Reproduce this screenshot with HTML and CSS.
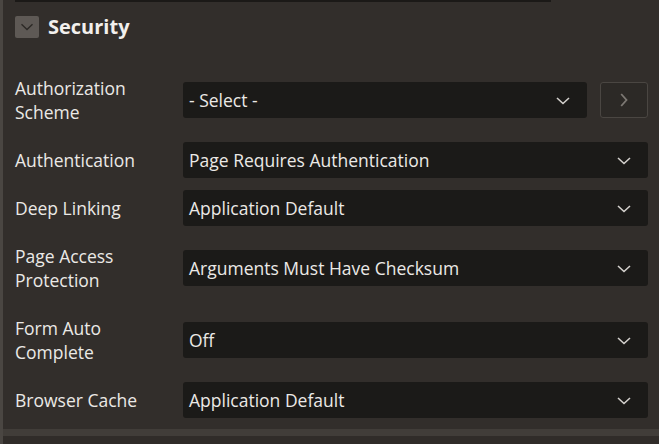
FILE: index.html
```html
<!DOCTYPE html>
<html>
<head>
<meta charset="utf-8">
<link rel="stylesheet" href="styles.css">
</head>
<body>
<div class="panel">
  <div class="prev-bar"></div>
  <div class="header">
    <button class="toggle" aria-label="Collapse">
      <svg width="14" height="8" viewBox="0 0 14 8"><path d="M1.5 1.2 L7 6.5 L12.5 1.2" fill="none" stroke="#2c2926" stroke-width="1.4"/></svg>
    </button>
    <h2 class="title">Security</h2>
  </div>
  <div class="form">
    <div class="row tall">
      <div class="label">Authorization<br>Scheme</div>
      <div class="field">
        <div class="select"><span>- Select -</span><svg class="chev" width="14" height="8" viewBox="0 0 14 8"><path d="M1 1 L7 6.5 L13 1" fill="none" stroke="#d4d1cd" stroke-width="1.6"/></svg></div>
        <button class="go" aria-label="Go"><svg width="8" height="14" viewBox="0 0 8 14"><path d="M1.2 1 L6.5 7 L1.2 13" fill="none" stroke="#7d7873" stroke-width="1.8"/></svg></button>
      </div>
    </div>
    <div class="row">
      <div class="label">Authentication</div>
      <div class="field">
        <div class="select"><span>Page Requires Authentication</span><svg class="chev" width="14" height="8" viewBox="0 0 14 8"><path d="M1 1 L7 6.5 L13 1" fill="none" stroke="#d4d1cd" stroke-width="1.6"/></svg></div>
      </div>
    </div>
    <div class="row">
      <div class="label">Deep Linking</div>
      <div class="field">
        <div class="select"><span>Application Default</span><svg class="chev" width="14" height="8" viewBox="0 0 14 8"><path d="M1 1 L7 6.5 L13 1" fill="none" stroke="#d4d1cd" stroke-width="1.6"/></svg></div>
      </div>
    </div>
    <div class="row tall">
      <div class="label">Page Access<br>Protection</div>
      <div class="field">
        <div class="select"><span>Arguments Must Have Checksum</span><svg class="chev" width="14" height="8" viewBox="0 0 14 8"><path d="M1 1 L7 6.5 L13 1" fill="none" stroke="#d4d1cd" stroke-width="1.6"/></svg></div>
      </div>
    </div>
    <div class="row tall">
      <div class="label">Form Auto<br>Complete</div>
      <div class="field">
        <div class="select"><span>Off</span><svg class="chev" width="14" height="8" viewBox="0 0 14 8"><path d="M1 1 L7 6.5 L13 1" fill="none" stroke="#d4d1cd" stroke-width="1.6"/></svg></div>
      </div>
    </div>
    <div class="row">
      <div class="label">Browser Cache</div>
      <div class="field">
        <div class="select"><span>Application Default</span><svg class="chev" width="14" height="8" viewBox="0 0 14 8"><path d="M1 1 L7 6.5 L13 1" fill="none" stroke="#d4d1cd" stroke-width="1.6"/></svg></div>
      </div>
    </div>
  </div>
</div>
<div class="footer-band"></div>
</body>
</html>
```
FILE: styles.css
```css
html, body {
  margin: 0;
  padding: 0;
  background: #302c29;
  height: 100%;
  overflow: hidden;
}
body {
  font-family: "Open Sans", "Noto Sans", sans-serif;
  color: #ebe9e6;
  border-left: 3px solid #4a4642;
}
.panel {
  padding: 0 11px 5px 12px;
  background: #322e2b;
}
.prev-bar {
  width: 536px;
  height: 2px;
  background: #1b1917;
}
.header {
  display: flex;
  align-items: center;
  gap: 9px;
  margin-top: 13px;
  height: 24px;
}
.toggle {
  width: 24px;
  height: 22px;
  border: none;
  border-radius: 2px;
  background: #5e5955;
  padding: 0;
  display: flex;
  align-items: center;
  justify-content: center;
}
.title {
  margin: 0;
  font-size: 20px;
  font-weight: 700;
  line-height: 24px;
  color: #f2f0ed;
}
.form {
  margin-top: 25px;
}
.row {
  display: grid;
  grid-template-columns: 168px 1fr;
  align-items: center;
  height: 48px;
}
.row.tall {
  height: 72px;
}
.label {
  font-size: 17.5px;
  line-height: 24px;
}
.field {
  display: flex;
  gap: 13px;
}
.select {
  flex: 1;
  height: 36px;
  background: #1b1a18;
  border-radius: 3px;
  display: flex;
  align-items: center;
  justify-content: space-between;
  padding: 0 17px 0 6px;
  font-size: 17.5px;
}
.chev {
  margin-top: 1px;
}
.go {
  width: 48px;
  height: 36px;
  box-sizing: border-box;
  border: 1px solid #4a4642;
  border-radius: 3px;
  background: #2c2926;
  padding: 0;
  display: flex;
  align-items: center;
  justify-content: center;
}
.footer-band {
  height: 7px;
  background: #413d39;
}
```
